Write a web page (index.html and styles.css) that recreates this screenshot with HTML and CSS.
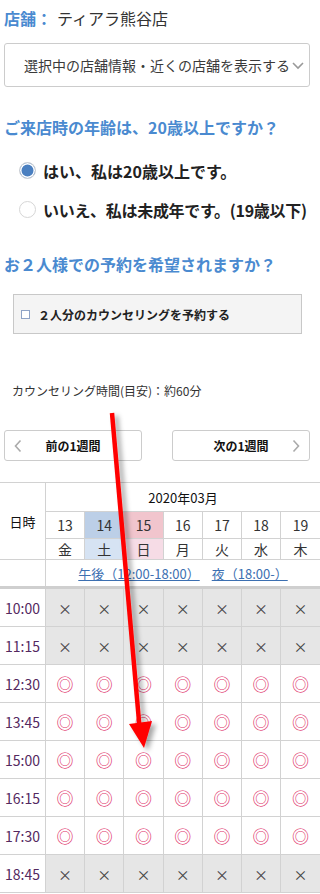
FILE: index.html
```html
<!DOCTYPE html>
<html lang="ja">
<head>
  <meta charset="UTF-8">
  <meta name="viewport" content="width=device-width, initial-scale=1.0">
  <link rel="stylesheet" href="styles.css">
</head>
<body>
  <div class="page">
    <div class="form">
      <div class="shop-name"><span class="shop-label">店舗：</span><span class="shop-value">ティアラ熊谷店</span></div>

      <div class="shop-select">
        <span>選択中の店舗情報・近くの店舗を表示する</span>
        <svg class="select-arrow" width="14" height="10" viewBox="0 0 14 10"><polyline points="2,2 7,7 12,2" fill="none" stroke="#999" stroke-width="1.6"/></svg>
      </div>

      <div class="question q-age">ご来店時の年齢は、20歳以上ですか？</div>
      <div class="radio-row"><span class="radio checked"></span><span class="radio-label">はい、私は20歳以上です。</span></div>
      <div class="radio-row tight"><span class="radio"></span><span class="radio-label">いいえ、私は未成年です。(19歳以下)</span></div>

      <div class="question q-pair">お２人様での予約を希望されますか？</div>
      <div class="pair-box"><span class="check"></span>２人分のカウンセリングを予約する</div>

      <div class="duration">カウンセリング時間(目安)：約60分</div>

      <div class="week-nav">
        <div class="week-btn">
          <svg class="chev chev-left" width="8" height="14" viewBox="0 0 8 14"><polyline points="6.5,1.5 1.5,7 6.5,12.5" fill="none" stroke="#aaa" stroke-width="1.6"/></svg>
          前の1週間
        </div>
        <div class="week-btn">
          次の1週間
          <svg class="chev chev-right" width="8" height="14" viewBox="0 0 8 14"><polyline points="1.5,1.5 6.5,7 1.5,12.5" fill="none" stroke="#aaa" stroke-width="1.6"/></svg>
        </div>
      </div>
    </div>

    <table class="calendar">
      <tr class="row-month">
        <th class="col-time head-time" rowspan="3">日時</th>
        <th colspan="7">2020年03月</th>
      </tr>
      <tr class="row-day">
        <th>13</th><th class="sat">14</th><th class="sun">15</th><th>16</th><th>17</th><th>18</th><th>19</th>
      </tr>
      <tr class="row-week">
        <th>金</th><th class="sat-light">土</th><th class="sun-light">日</th><th>月</th><th>火</th><th>水</th><th>木</th>
      </tr>
      <tr class="row-links">
        <td class="col-time"></td>
        <td colspan="7"><a class="jump" href="#">午後（12:00-18:00）</a><a class="jump" href="#">夜（18:00-）</a></td>
      </tr>
      <tr class="slot closed"><td class="col-time">10:00</td><td>×</td><td>×</td><td>×</td><td>×</td><td>×</td><td>×</td><td>×</td></tr>
      <tr class="slot closed"><td class="col-time">11:15</td><td>×</td><td>×</td><td>×</td><td>×</td><td>×</td><td>×</td><td>×</td></tr>
      <tr class="slot"><td class="col-time">12:30</td><td class="ok">◎</td><td class="ok">◎</td><td class="ok">◎</td><td class="ok">◎</td><td class="ok">◎</td><td class="ok">◎</td><td class="ok">◎</td></tr>
      <tr class="slot"><td class="col-time">13:45</td><td class="ok">◎</td><td class="ok">◎</td><td class="ok">◎</td><td class="ok">◎</td><td class="ok">◎</td><td class="ok">◎</td><td class="ok">◎</td></tr>
      <tr class="slot"><td class="col-time">15:00</td><td class="ok">◎</td><td class="ok">◎</td><td class="ok">◎</td><td class="ok">◎</td><td class="ok">◎</td><td class="ok">◎</td><td class="ok">◎</td></tr>
      <tr class="slot"><td class="col-time">16:15</td><td class="ok">◎</td><td class="ok">◎</td><td class="ok">◎</td><td class="ok">◎</td><td class="ok">◎</td><td class="ok">◎</td><td class="ok">◎</td></tr>
      <tr class="slot"><td class="col-time">17:30</td><td class="ok">◎</td><td class="ok">◎</td><td class="ok">◎</td><td class="ok">◎</td><td class="ok">◎</td><td class="ok">◎</td><td class="ok">◎</td></tr>
      <tr class="slot closed"><td class="col-time">18:45</td><td>×</td><td>×</td><td>×</td><td>×</td><td>×</td><td>×</td><td>×</td></tr>
    </table>

    <!-- annotation arrow drawn over the page -->
    <svg class="annotation" width="320" height="894" viewBox="0 0 320 894">
      <defs>
        <filter id="shade" x="-50%" y="-10%" width="200%" height="120%">
          <feDropShadow dx="4" dy="3" stdDeviation="2.5" flood-color="#000" flood-opacity="0.35"/>
        </filter>
      </defs>
      <g filter="url(#shade)">
        <line x1="112" y1="413" x2="139.5" y2="727" stroke="#ff0000" stroke-width="4.5"/>
        <polygon points="129,724 152,721 144,748" fill="#ff0000"/>
      </g>
    </svg>
  </div>
</body>
</html>
```

FILE: styles.css
```css
body {
  margin: 0;
  font-family: "Noto Sans CJK JP", "Noto Sans", sans-serif;
  color: #333;
  background-color: #fff;
  overflow: hidden;
}

.page {
  position: relative;
  width: 320px;
  height: 894px;
}

.form {
  padding-left: 4px;
}

.shop-name {
  padding-top: 6px;
  font-size: 16px;
  line-height: 24px;
  color: #333;
}

.shop-label {
  color: #4a8ad0;
  font-weight: bold;
}

.shop-value {
  margin-left: 5px;
}

.shop-select {
  margin-top: 13px;
  width: 285px;
  height: 42px;
  border: 1px solid #ccc;
  border-radius: 3px;
  display: flex;
  align-items: center;
  padding-left: 19px;
  font-size: 14px;
  color: #3a3a3a;
  white-space: nowrap;
}

.select-arrow {
  margin-left: 1px;
  margin-top: 2px;
}

.question {
  font-size: 16px;
  line-height: 22px;
  font-weight: bold;
  color: #4a8ad0;
  white-space: nowrap;
}

.q-age {
  margin-top: 29px;
}

.q-pair {
  margin-top: 24px;
}

.radio-row {
  height: 39px;
  display: flex;
  align-items: center;
  font-size: 16px;
  font-weight: bold;
  color: #222;
}

.radio-label {
  flex-shrink: 0;
  white-space: nowrap;
  line-height: 22px;
}

/* long label only just fits the 320px screen */
.radio-row.tight {
  letter-spacing: -0.3px;
}

.q-age + .radio-row {
  margin-top: 13px;
}

.radio {
  width: 15px;
  height: 15px;
  margin-left: 15px;
  margin-right: 7px;
  border: 1px solid #d6d6d6;
  border-radius: 50%;
  background-color: #fff;
  flex-shrink: 0;
}

.radio.checked {
  background-color: #4a7fc0;
  box-shadow: inset 0 0 0 1.5px #fff;
}

.pair-box {
  margin-top: 19px;
  margin-left: 9px;
  width: 287px;
  height: 38px;
  border: 1px solid #c8c8c8;
  background-color: #f4f4f4;
  display: flex;
  align-items: center;
  font-size: 12px;
  font-weight: bold;
  color: #222;
}

.check {
  width: 7px;
  height: 7px;
  margin-left: 7px;
  margin-right: 8px;
  border: 1px solid #8fa3c6;
  background-color: #fff;
}

.duration {
  margin-top: 49px;
  padding-left: 8px;
  font-size: 12px;
  line-height: 16px;
  color: #333;
}

.week-nav {
  margin-top: 31px;
  width: 306px;
  display: flex;
  justify-content: space-between;
}

.week-btn {
  position: relative;
  width: 136px;
  height: 29px;
  border: 1px solid #ccc;
  border-radius: 3px;
  display: flex;
  align-items: center;
  justify-content: center;
  font-size: 12px;
  font-weight: bold;
  color: #111;
}

.chev {
  position: absolute;
  top: 8px;
}

.chev-left {
  left: 9px;
}

.chev-right {
  right: 9px;
}

.calendar {
  margin-top: 21px;
  width: 320px;
  border-collapse: collapse;
  table-layout: fixed;
  font-size: 14px;
  color: #333;
}

.calendar th,
.calendar td {
  border: 1px solid #d2d2d2;
  padding: 0;
  text-align: center;
  font-weight: normal;
}

.calendar tr > :first-child {
  border-left: none;
}

.calendar tr > :last-child {
  border-right: none;
}

.col-time {
  width: 45px;
}

.head-time {
  font-size: 13px;
  color: #222;
}

.row-month th {
  height: 28px;
  font-size: 13px;
  color: #111;
}

.row-day th {
  height: 26px;
}

.row-week th {
  height: 19px;
}

.sat { background-color: #bccfe7; }
.sun { background-color: #f1c5cd; }
.sat-light { background-color: #d6e3f3; }
.sun-light { background-color: #f6dce6; }

.row-links td {
  height: 26px;
  border-bottom: 3px solid #cfcfcf;
}

.jump {
  color: #3c6fb1;
  font-size: 13px;
  margin: 0 6px;
}

.slot td {
  height: 37px;
}

.slot .col-time {
  background-color: #fff;
  color: #54295f;
}

.closed td {
  background-color: #e6e6e6;
  color: #444;
}

.ok {
  color: #e0306a;
  font-size: 17px;
}

.annotation {
  position: absolute;
  top: 0;
  left: 0;
  pointer-events: none;
}
```
